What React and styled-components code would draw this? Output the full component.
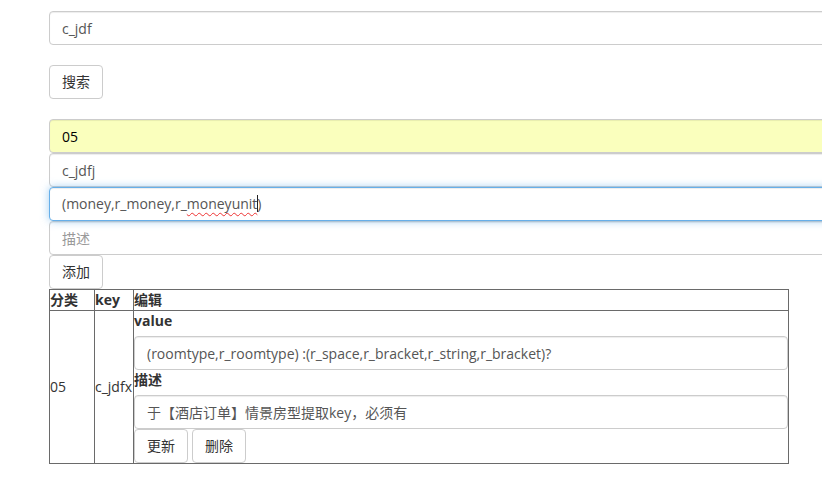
import React from 'react'
import styled, { createGlobalStyle, css } from 'styled-components'

const GlobalStyle = createGlobalStyle`
  html, body {
    margin: 0;
    overflow: hidden;
    background: #fff;
  }
  body {
    font-family: "Open Sans", "Noto Sans CJK SC", sans-serif;
    font-size: 14px;
    line-height: 20px;
    color: #333;
  }
  * { box-sizing: border-box; }
`

const Page = styled.div`
  padding: 11px 0 0 49px;
  width: 100%;
  overflow: hidden;
`

const fieldBase = css`
  display: block;
  width: calc(100% + 40px);
  height: 34px;
  padding: 6px 12px;
  font: inherit;
  font-size: 14px;
  line-height: 20px;
  color: ${p => (p.$autofill ? '#000' : '#555')};
  background: ${p => (p.$autofill ? '#faffbd' : '#fff')};
  border: 1px solid ${p => (p.$focus ? '#66afe9' : '#ccc')};
  border-radius: 4px;
  box-shadow: inset 0 1px 1px rgba(0, 0, 0, 0.075)
    ${p => (p.$focus ? ', 0 0 8px rgba(102, 175, 233, 0.6)' : '')};
  outline: none;
  white-space: nowrap;
  overflow: hidden;

  &::placeholder { color: #999; }
`

const Input = styled.input`
  ${fieldBase}
`

const CellInput = styled.input`
  ${fieldBase}
  width: 100%;
`

const FocusedField = styled.div`
  ${fieldBase}
  position: relative;
  z-index: 1;
`

const SpellError = styled.span`
  text-decoration: underline wavy #e33;
  text-decoration-thickness: 1px;
  text-underline-offset: 3px;
`

const Caret = styled.span`
  display: inline-block;
  width: 1px;
  height: 17px;
  margin: 0 -1px -3px 0;
  background: #222;
`

const Button = styled.button`
  display: inline-block;
  height: 34px;
  padding: 6px 12px;
  font: inherit;
  font-size: 14px;
  line-height: 20px;
  color: #333;
  background: #fff;
  border: 1px solid #ccc;
  border-radius: 4px;
  cursor: pointer;
`

const Spacer = styled.div`
  height: ${p => p.$h}px;
`

const ButtonRow = styled.div`
  display: flex;
  gap: 4px;
`

const Table = styled.table`
  width: 740px;
  border-collapse: collapse;
  border: 1px solid #222;

  th, td {
    padding: 0;
    border: 1px solid #6a6a6a;
    text-align: left;
    vertical-align: middle;
  }
  th { font-weight: 700; line-height: 20px; }
`

const Label = styled.label`
  display: inline-block;
  margin-bottom: 5px;
  font-weight: 700;
`

export default function App() {
  return (
    <Page>
      <GlobalStyle />
      <Input defaultValue="c_jdf" />
      <Spacer $h={20} />
      <Button>搜索</Button>
      <Spacer $h={20} />

      <Input $autofill defaultValue="05" />
      <Input defaultValue="c_jdfj" />
      <FocusedField $focus>
        (money,r_money,r_<SpellError>moneyunit</SpellError><Caret />)
      </FocusedField>
      <Input placeholder="描述" />
      <Button>添加</Button>

      <Table>
        <colgroup>
          <col style={{ width: 45 }} />
          <col style={{ width: 39 }} />
          <col />
        </colgroup>
        <thead>
          <tr>
            <th>分类</th>
            <th>key</th>
            <th>编辑</th>
          </tr>
        </thead>
        <tbody>
          <tr>
            <td>05</td>
            <td>c_jdfx</td>
            <td>
              <Label>value</Label>
              <CellInput defaultValue="(roomtype,r_roomtype) :(r_space,r_bracket,r_string,r_bracket)?" />
              <Label>描述</Label>
              <CellInput defaultValue="于【酒店订单】情景房型提取key，必须有" />
              <ButtonRow>
                <Button>更新</Button>
                <Button>删除</Button>
              </ButtonRow>
            </td>
          </tr>
        </tbody>
      </Table>
    </Page>
  )
}
